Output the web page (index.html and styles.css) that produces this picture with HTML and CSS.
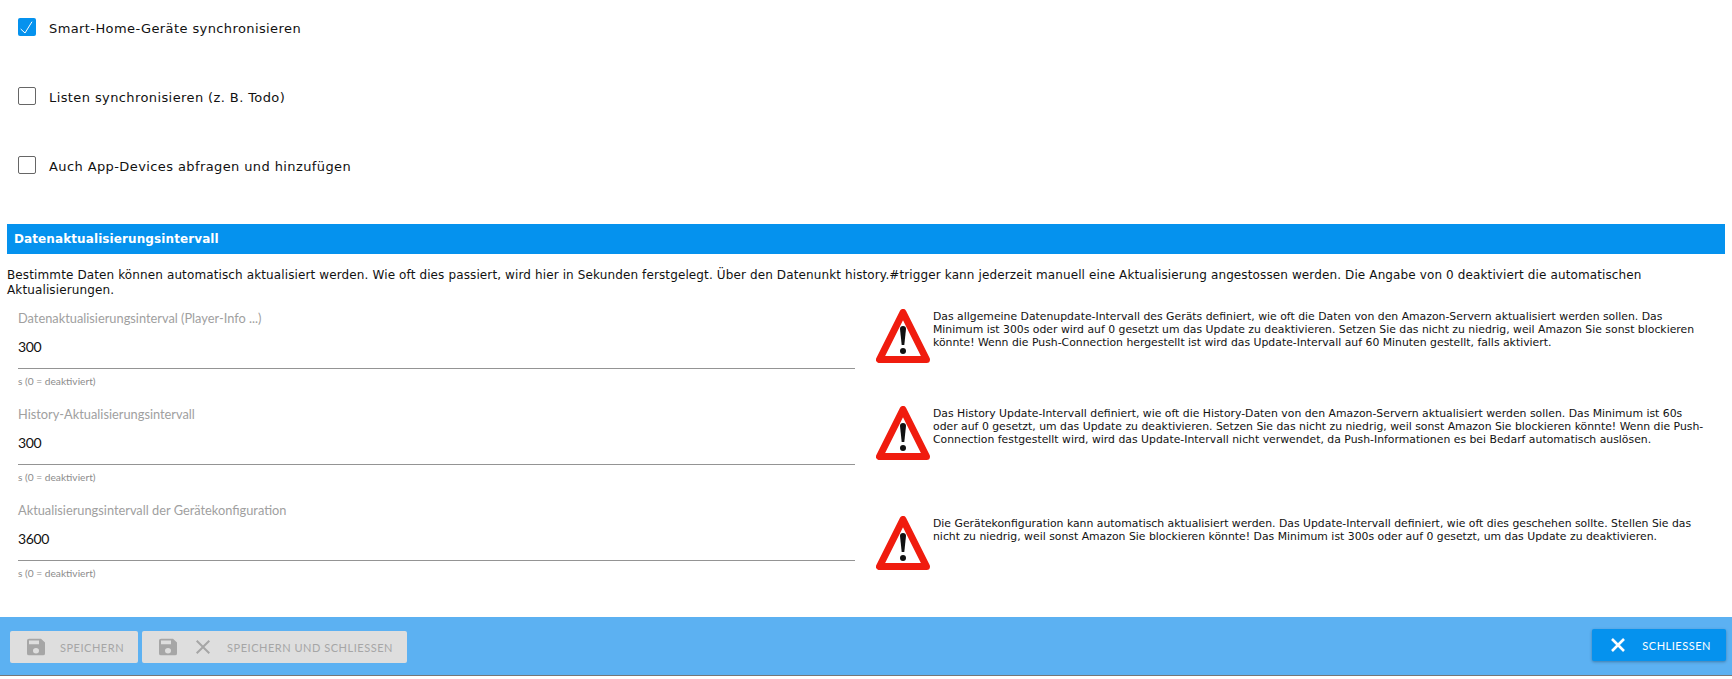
FILE: index.html
```html
<!DOCTYPE html>
<html lang="de">
<head>
    <meta charset="UTF-8">
    <meta content="width=device-width" name="viewport">
    <title>Einstellungen</title>
    <link rel="stylesheet" href="styles.css">
</head>
<body>
    <div class="app">
        <div class="content">
            <div class="checks">
                <label class="check">
                    <span class="box on">
                        <svg viewBox="0 0 18 18" width="18" height="18"><path d="M2.7 11l4.3 4 7-11.3" fill="none" stroke="#fff" stroke-width="1"/></svg>
                    </span>
                    <span class="text">Smart-Home-Geräte synchronisieren</span>
                </label>
                <label class="check">
                    <span class="box"></span>
                    <span class="text">Listen synchronisieren (z. B. Todo)</span>
                </label>
                <label class="check">
                    <span class="box"></span>
                    <span class="text">Auch App-Devices abfragen und hinzufügen</span>
                </label>
            </div>
            <div class="header">Datenaktualisierungsintervall</div>
            <p class="intro">Bestimmte Daten können automatisch aktualisiert werden. Wie oft dies passiert, wird hier in Sekunden ferstgelegt. Über den Datenunkt history.#trigger kann jederzeit manuell eine Aktualisierung angestossen werden. Die Angabe von 0 deaktiviert die automatischen Aktualisierungen.</p>
            <div class="row">
                <div class="field">
                    <div class="label">Datenaktualisierungsinterval (Player-Info ...)</div>
                    <div class="value">300</div>
                    <div class="help">s (0 = deaktiviert)</div>
                </div>
                <div class="note">
                    <svg class="warn" viewBox="0 0 54 54" width="54" height="54"><path d="M27 3.5L3.5 50.5h47z" fill="#fff" stroke="#f01c0e" stroke-width="7" stroke-linejoin="round"/><path d="M24 20a3 3 0 0 1 6 0L28.3 36h-2.6z" fill="#111"/><circle cx="27" cy="42" r="3" fill="#111"/></svg>
                    <p>Das allgemeine Datenupdate-Intervall des Geräts definiert, wie oft die Daten von den Amazon-Servern aktualisiert werden sollen. Das Minimum ist 300s oder wird auf 0 gesetzt um das Update zu deaktivieren. Setzen Sie das nicht zu niedrig, weil Amazon Sie sonst blockieren könnte! Wenn die Push-Connection hergestellt ist wird das Update-Intervall auf 60 Minuten gestellt, falls aktiviert.</p>
                </div>
            </div>
            <div class="row">
                <div class="field">
                    <div class="label">History-Aktualisierungsintervall</div>
                    <div class="value">300</div>
                    <div class="help">s (0 = deaktiviert)</div>
                </div>
                <div class="note mid">
                    <svg class="warn" viewBox="0 0 54 54" width="54" height="54"><path d="M27 3.5L3.5 50.5h47z" fill="#fff" stroke="#f01c0e" stroke-width="7" stroke-linejoin="round"/><path d="M24 20a3 3 0 0 1 6 0L28.3 36h-2.6z" fill="#111"/><circle cx="27" cy="42" r="3" fill="#111"/></svg>
                    <p>Das History Update-Intervall definiert, wie oft die History-Daten von den Amazon-Servern aktualisiert werden sollen. Das Minimum ist 60s oder auf 0 gesetzt, um das Update zu deaktivieren. Setzen Sie das nicht zu niedrig, weil sonst Amazon Sie blockieren könnte! Wenn die Push-Connection festgestellt wird, wird das Update-Intervall nicht verwendet, da Push-Informationen es bei Bedarf automatisch auslösen.</p>
                </div>
            </div>
            <div class="row">
                <div class="field">
                    <div class="label">Aktualisierungsintervall der Gerätekonfiguration</div>
                    <div class="value">3600</div>
                    <div class="help">s (0 = deaktiviert)</div>
                </div>
                <div class="note low">
                    <svg class="warn" viewBox="0 0 54 54" width="54" height="54"><path d="M27 3.5L3.5 50.5h47z" fill="#fff" stroke="#f01c0e" stroke-width="7" stroke-linejoin="round"/><path d="M24 20a3 3 0 0 1 6 0L28.3 36h-2.6z" fill="#111"/><circle cx="27" cy="42" r="3" fill="#111"/></svg>
                    <p>Die Gerätekonfiguration kann automatisch aktualisiert werden. Das Update-Intervall definiert, wie oft dies geschehen sollte. Stellen Sie das nicht zu niedrig, weil sonst Amazon Sie blockieren könnte! Das Minimum ist 300s oder auf 0 gesetzt, um das Update zu deaktivieren.</p>
                </div>
            </div>
        </div>
        <div class="footer">
            <div class="btn disabled">
                <svg class="save" viewBox="0 0 24 24" width="24" height="22" preserveAspectRatio="none"><path d="M17 3H5a2 2 0 0 0-2 2v14a2 2 0 0 0 2 2h14a2 2 0 0 0 2-2V7zm-5 16a3 3 0 1 1 0-6 3 3 0 0 1 0 6zm3-10H5V5h10z" fill="#a6a6a6"/></svg>
                <span>Speichern</span>
            </div>
            <div class="btn disabled">
                <svg class="save" viewBox="0 0 24 24" width="24" height="22" preserveAspectRatio="none"><path d="M17 3H5a2 2 0 0 0-2 2v14a2 2 0 0 0 2 2h14a2 2 0 0 0 2-2V7zm-5 16a3 3 0 1 1 0-6 3 3 0 0 1 0 6zm3-10H5V5h10z" fill="#a6a6a6"/></svg>
                <svg class="cross" viewBox="0 0 24 24" width="24" height="24"><path d="M19 6.4L17.6 5 12 10.6 6.4 5 5 6.4 10.6 12 5 17.6 6.4 19 12 13.4 17.6 19 19 17.6 13.4 12z" fill="#a6a6a6"/></svg>
                <span>Speichern und schliessen</span>
            </div>
            <div class="btn close">
                <svg viewBox="0 0 24 24" width="24" height="24"><path d="M6 6l12 12M18 6L6 18" fill="none" stroke="#fff" stroke-width="2.6"/></svg>
                <span>Schliessen</span>
            </div>
        </div>
    </div>
</body>
</html>
```

FILE: styles.css
```css
* {
    margin: 0;
    padding: 0;
    box-sizing: border-box;
}
html, body {
    height: 100%;
}
body {
    background-color: #fff;
    color: #111;
    font-family: "DejaVu Sans", sans-serif;
    overflow: hidden;
}
.app {
    height: 679px;
}
.content {
    height: 617px;
    padding: 0 7px;
}

.checks {
    height: 224px;
    padding: 18px 0 0 11px;
}
.check {
    display: flex;
    align-items: center;
    gap: 13px;
    height: 18px;
    margin-bottom: 51px;
    font-size: 13px;
    letter-spacing: .4px;
}
.check .text {
    margin-top: 2px;
}
.box {
    width: 18px;
    height: 18px;
    border: 1.5px solid #666;
    border-radius: 2px;
}
.box.on {
    border: 0;
    background-color: #0592ee;
}
.box svg {
    display: block;
}

.header {
    height: 30px;
    line-height: 30px;
    padding-left: 7px;
    background-color: #0592ee;
    color: #fff;
    font-size: 12px;
    font-weight: bold;
    letter-spacing: .1px;
}
.intro {
    height: 43px;
    padding-top: 14px;
    font-size: 12px;
    letter-spacing: .12px;
    line-height: 15px;
}

.row {
    display: flex;
    height: 96px;
}
.field {
    width: 837px;
    margin-left: 11px;
    padding-top: 13px;
    font-family: Lato, sans-serif;
}
.label {
    height: 16px;
    line-height: 16px;
    font-size: 12.8px;
    color: #a0a0a0;
}
.value {
    height: 43px;
    padding-top: 11px;
    line-height: 20px;
    font-size: 14px;
    letter-spacing: -.4px;
    border-bottom: 1px solid #949494;
}
.help {
    padding-top: 6px;
    line-height: 12px;
    font-size: 10.2px;
    color: #8c8c8c;
}
.note {
    display: flex;
    align-items: flex-start;
    gap: 3px;
    margin-left: 21px;
    padding-top: 12px;
}
.note.mid {
    padding-top: 13px;
}
.note.low {
    padding-top: 27px;
}
.warn {
    flex: none;
}
.note p {
    width: 772px;
    padding-top: 1px;
    font-size: 10.85px;
    line-height: 13px;
}

.footer {
    height: 59px;
    display: flex;
    align-items: center;
    gap: 4px;
    padding: 0 6px 0 10px;
    background-color: #5cb1f2;
    border-bottom: 1px solid #777;
}
.btn {
    display: flex;
    align-items: center;
    gap: 12px;
    height: 32px;
    padding: 0 14px;
    border-radius: 2px;
    font-family: Lato, sans-serif;
    font-size: 11px;
    letter-spacing: .52px;
    text-transform: uppercase;
}
.cross {
    margin-left: -1px;
}
.disabled {
    margin-top: 2px;
    background-color: #dedede;
    color: #a6a6a6;
}
.close {
    margin: -2px 0 0 auto;
    padding-right: 15px;
    background-color: #0592ee;
    color: #fff;
    box-shadow: 0 1px 3px rgba(0,0,0,.3);
}
```
